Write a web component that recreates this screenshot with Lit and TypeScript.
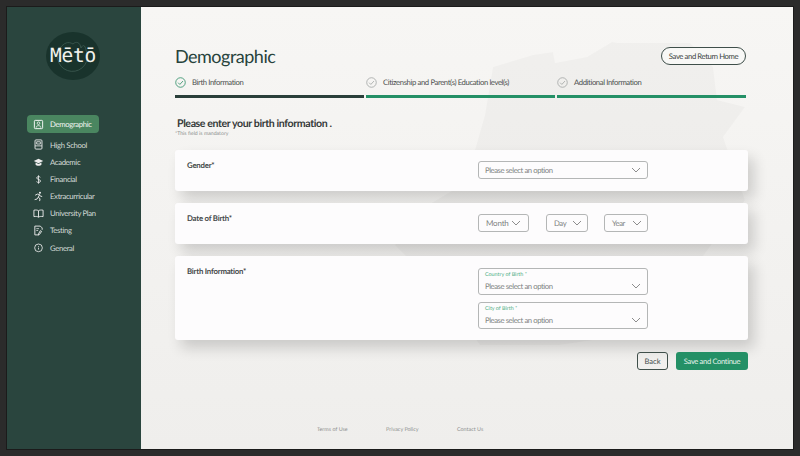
import { LitElement, html, css, svg } from "lit";
import { customElement } from "lit/decorators.js";

const chev = html`<svg class="chev" width="10" height="6" viewBox="0 0 10 6"><path d="M1 1l4 4 4-4" fill="none" stroke="#808080" stroke-width=".9"/></svg>`;
const check = (c: string) => html`<svg width="11" height="11" viewBox="0 0 12 12" class="chk"><circle cx="6" cy="6" r="5.2" fill="none" stroke="${c}" stroke-width=".9"/><path d="M3.4 6.2l1.9 1.9 3.4-3.7" fill="none" stroke="${c}" stroke-width=".9"/></svg>`;

const icons: Record<string, unknown> = {
  Demographic: svg`<rect x="1.5" y="1.5" width="9" height="9" rx="1" fill="none" stroke="#fff" stroke-width="1"/><circle cx="6" cy="4.6" r="1.4" fill="none" stroke="#fff" stroke-width=".8"/><path d="M3.4 9.5c0-3 5.2-3 5.2 0" fill="none" stroke="#fff" stroke-width=".8"/>`,
  "High School": svg`<rect x="2.2" y="1" width="7.6" height="10" rx="1" fill="none" stroke="#eee" stroke-width="1"/><path d="M2.2 7.5h7.6M4 3h4v2.5H4z" fill="none" stroke="#eee" stroke-width=".9"/>`,
  Academic: svg`<path d="M6 2L.8 4.4 6 6.8l5.2-2.4z" fill="#eee"/><path d="M2.8 6v2.4C4 10 8 10 9.2 8.4V6L6 7.5z" fill="#eee"/>`,
  Financial: svg`<path d="M8 3.6C7.4 2.6 4 2.4 4 4.3c0 2 4.2 1.2 4.2 3.4 0 2-3.6 1.8-4.4.6M6 1.4v9.2" fill="none" stroke="#eee" stroke-width=".9"/>`,
  Extracurricular: svg`<circle cx="7.6" cy="1.8" r="1.1" fill="#eee"/><path d="M2.4 4.6l2.4-1.2 2.4.5-1.5 3 2 1.5-.5 2.6M5.4 7L4.4 8.8 1.8 9.4M7 4.2l1 1.4 2 .4" fill="none" stroke="#eee" stroke-width="1"/>`,
  "University Plan": svg`<path d="M6 3C5 2.2 3 2 1 2.4v7C3 9 5 9.2 6 10c1-.8 3-1 5-.6v-7C9 2 7 2.2 6 3zM6 3v7" fill="none" stroke="#eee" stroke-width="1"/>`,
  Testing: svg`<path d="M2 1.2h6l2 2v2M2 1.2v9.6h4.4M8 6.2l-2 3.6v1l1-.4 2.4-3.4z" fill="none" stroke="#eee" stroke-width="1"/><path d="M3.6 4h3M3.6 6h2" stroke="#eee" stroke-width=".8"/>`,
  General: svg`<circle cx="6" cy="6.4" r="4.2" fill="none" stroke="#eee" stroke-width=".9"/><path d="M6 4.6v.8M6 6.2v2" stroke="#eee" stroke-width=".9"/>`,
};

const navItems = ["High School", "Academic", "Financial", "Extracurricular", "University Plan", "Testing", "General"];

@customElement("app-root")
export class AppRoot extends LitElement {
  static styles = css`
    :host { display: block; width: 800px; height: 456px; font-family: Lato, "Open Sans", sans-serif; overflow: hidden; text-rendering: geometricPrecision; }
    * { box-sizing: border-box; }
    .frame { width: 800px; height: 456px; background: #2b2b2b; padding: 7px; }
    .app { display: flex; height: 442px; overflow: hidden; box-shadow: 0 0 0 1px #1b1b1b; }
    .side { width: 134px; background: #2a453e; flex: none; display: flex; flex-direction: column; align-items: flex-start; }
    .logo { position: relative; width: 54px; height: 48px; margin: 25px 0 0 39px; background: #19332c; border-radius: 50%; display: flex; align-items: center; justify-content: center; overflow: hidden; }
    .logo svg { position: absolute; left: 10px; top: 4px; }
    .logo span { position: relative; font-family: "DejaVu Sans Mono", monospace; color: #f2f2ee; font-size: 19.5px; line-height: 1; letter-spacing: -.2px; margin-top: -1px; }
    nav { display: flex; flex-direction: column; margin: 35px 0 0 20px; width: 72px; }
    .item { display: flex; align-items: center; height: 17.1px; gap: 6px; padding-left: 6px; color: #d5dcd8; font-size: 7.7px; letter-spacing: -.32px; white-space: nowrap; }
    .item svg { flex: none; width: 11px; height: 11px; }
    .item.active { height: 18px; background: #4a8660; border-radius: 4px; margin-bottom: 3.4px; color: #f3f6f3; width: 72px; }
    main { position: relative; flex: 1; padding: 0 48px 0 34px; display: flex; flex-direction: column; overflow: hidden; background: linear-gradient(#f7f6f4, #efeeec); }
    .map { position: absolute; left: 0; top: 0; }
    .top, .steps, h2, .note, .card, .actions, footer { position: relative; }
    .top { display: flex; justify-content: space-between; align-items: flex-start; padding-top: 39px; height: 62px; }
    h1 { margin: 0; font-size: 18px; line-height: 20px; font-weight: 400; color: #27433c; letter-spacing: -.5px; }
    .save { margin: 1px -1px 0 0; width: 85px; height: 18px; border: 1px solid #3f4f4a; border-radius: 9px; font-size: 7.7px; letter-spacing: -.4px; color: #3a4240; display: flex; align-items: center; justify-content: center; background: #f8f8f6; }
    .steps { display: grid; grid-template-columns: 189px 189px 189px; gap: 2px; margin-top: 5px; }
    .step { display: flex; flex-direction: column; }
    .lbl { display: flex; align-items: center; gap: 6px; height: 16px; font-size: 7.7px; letter-spacing: -.38px; color: #4b4f4e; white-space: nowrap; }
    .chk { flex: none; }
    .bar { height: 3px; background: #249066; margin-top: 5px; }
    .bar.cur { background: #2a3f3a; }
    h2 { margin: 19px 0 0 2px; font-size: 10.6px; line-height: 14px; font-weight: 700; color: #353a39; letter-spacing: -.4px; }
    .note { font-size: 5.2px; line-height: 7px; color: #8b8f8d; margin-top: 0; }
    .card { width: 573px; background: #fdfcfd; border-radius: 3px; box-shadow: 6px 8px 14px rgba(0,0,0,.16); display: grid; grid-template-columns: 291px 1fr; padding: 11px 12px; margin-bottom: 12px; }
    .first { margin-top: 12px; }
    .card label { font-size: 7.8px; line-height: 9px; font-weight: 700; color: #45494a; letter-spacing: -.22px; }
    .sel { width: 170px; height: 18px; border: 1px solid #b4b6b6; border-radius: 3px; display: flex; align-items: center; justify-content: space-between; padding: 0 6px 1px; font-size: 7.7px; letter-spacing: -.42px; color: #7e8281; background: #fdfcfd; }
    .dates { display: flex; gap: 17px; }
    .sel.m { width: 51px; padding: 0 7px 1px; font-size: 8px; letter-spacing: -.2px; } .sel.d { width: 42px; padding: 0 5px 1px 7px; } .sel.y { width: 44px; padding: 0 5px 1px 7px; margin-left: -1px; }
    .stack { display: flex; flex-direction: column; gap: 7px; margin-top: 1px; }
    .tall { height: 27px; padding-top: 1px; position: relative; display: block; }
    .tall small { display: block; font-size: 5.4px; line-height: 7px; color: #4fae85; margin-top: 2px; letter-spacing: 0; }
    .tall div { font-size: 7.7px; line-height: 12px; margin-top: 1px; }
    .tall .chev { position: absolute; right: 6px; bottom: 5px; }
    .actions { width: 573px; display: flex; justify-content: flex-end; gap: 8px; }
    .back { width: 31px; height: 18px; border: 1px solid #3f4f4a; border-radius: 3px; font-size: 7.6px; color: #475250; display: flex; align-items: center; justify-content: center; }
    .go { width: 72px; height: 18px; background: #249066; border-radius: 3px; font-size: 7.6px; letter-spacing: -.35px; color: #e6f2ec; display: flex; align-items: center; justify-content: center; }
    footer { display: flex; margin: 57px 0 0 142px; font-size: 5.4px; color: #8e908f; }
    footer span:nth-child(1) { width: 69px; } footer span:nth-child(2) { width: 71px; }
  `;

  render() {
    return html`<div class="frame"><div class="app">
      <aside class="side">
        <div class="logo">
          <svg width="34" height="40" viewBox="0 0 34 40"><path d="M4 12A15 15 0 1 0 30 14C29 9 27 8 25 12 24 6 20 5 17 8 12 5 8 7 4 12z" fill="none" stroke="#3f5c53" stroke-width=".8"/></svg>
          <span>Mētō</span>
        </div>
        <nav>
          <div class="item active"><svg viewBox="0 0 12 12">${icons.Demographic}</svg>Demographic</div>
          ${navItems.map((n) => html`<div class="item"><svg viewBox="0 0 12 12">${icons[n]}</svg>${n}</div>`)}
        </nav>
      </aside>
      <main>
        <svg class="map" width="652" height="442" viewBox="141 7 652 442"><path d="M475 150L485 115 493 67 533 55 553 52 555 63 587 57 612 42 618 43 690 43 713 67 717 100 745 107 723 137 745 200 700 260 660 330 560 345 480 345 440 290 395 245 420 210 470 180z" fill="rgba(0,0,0,.025)"/></svg>
        <div class="top"><h1>Demographic</h1><div class="save">Save and Return Home</div></div>
        <div class="steps">
          <div class="step"><div class="lbl">${check("#2f8f68")}<span>Birth Information</span></div><div class="bar cur"></div></div>
          <div class="step"><div class="lbl">${check("#a3a6a5")}<span>Citizenship and Parent(s) Education level(s)</span></div><div class="bar"></div></div>
          <div class="step"><div class="lbl">${check("#a3a6a5")}<span>Additional Information</span></div><div class="bar"></div></div>
        </div>
        <h2>Please enter your birth information .</h2>
        <div class="note">*This field is mandatory</div>
        <div class="card first" style="height:41px"><label>Gender*</label><div class="sel">Please select an option ${chev}</div></div>
        <div class="card" style="height:41px"><label>Date of Birth*</label><div class="dates">
          <div class="sel m">Month ${chev}</div><div class="sel d">Day ${chev}</div><div class="sel y">Year ${chev}</div></div></div>
        <div class="card" style="height:84px"><label>Birth Information*</label><div class="stack">
          <div class="sel tall"><small>Country of Birth *</small><div>Please select an option</div>${chev}</div>
          <div class="sel tall"><small>City of Birth *</small><div>Please select an option</div>${chev}</div>
        </div></div>
        <div class="actions"><div class="back">Back</div><div class="go">Save and Continue</div></div>
        <footer><span>Terms of Use</span><span>Privacy Policy</span><span>Contact Us</span></footer>
      </main>
    </div></div>`;
  }
}
